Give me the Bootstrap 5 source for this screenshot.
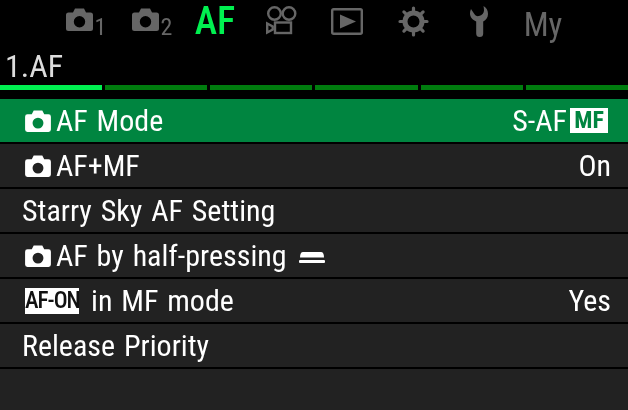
<!DOCTYPE html>
<html lang="en">
<head>
<meta charset="utf-8">
<title>AF Menu</title>
<link rel="stylesheet" href="https://cdn.jsdelivr.net/npm/bootstrap@5.3.0/dist/css/bootstrap.min.css">
<style>
html,body{height:100%;background:#000;overflow:hidden}
body{font-family:"Roboto Condensed",Roboto,sans-serif;font-stretch:75%;color:#fff}
.shell{width:628px;height:410px;filter:blur(.35px)}
.tabbar{height:42px;padding-left:50px}
.tabcell{width:66px;height:42px;color:#666;font-size:30px;line-height:1}
.tabcell svg{display:block;fill:currentColor}
.tabcamcell{padding-left:6px}
.tabcam{margin-bottom:4px}
.tabmovie{margin-bottom:2px}
.tabsub{font-size:24px;margin-left:2px;align-self:flex-end;margin-bottom:3px;line-height:1}
.tabactive{color:#00f050;font-weight:500;font-size:38px;padding-bottom:1px}
.tabmy{font-size:33px;padding:7px 4px 0 0}
.sectitle{height:43px;padding:8px 0 0 5px;font-size:32px;line-height:32px;color:#ddd}
.segrow{display:grid;grid-template-columns:repeat(6,1fr);gap:3px;height:5px;margin-bottom:9px}
.segpart{background:#007c0e}
.segon{background:#00f050}
.menulist{height:311px;background:#222}
.menurow{height:45px;padding:0 17px 0 22px;border-bottom:2px solid #000;font-size:30px;line-height:1;word-spacing:2px;background:#222;color:#fff}
.menurow svg{display:block;fill:currentColor;flex:none}
.rowsel{background:#008540}
.camgap{margin:0 5px 0 3px}
.tagmf{background:#fff;color:#008540;font-weight:700;font-size:24px;width:38px;height:25px;line-height:25px;text-align:center;margin:0 3px 0 3px;word-spacing:0}
.tagon{background:#fff;color:#111;font-weight:500;font-size:23px;width:54px;height:26px;line-height:26px;text-align:center;margin:0 12px 0 3px;letter-spacing:-1px;white-space:nowrap}
.halfmark{margin-left:12px;margin-top:3px}
</style>
</head>
<body>
<svg width="0" height="0" class="d-block position-absolute"><defs><path id="camshape" fill-rule="evenodd" d="M2.500 4.500H7L9 .5h9L20 4.500h4.500A2.500 2.500 0 0 1 27 7v13.500a2.500 2.500 0 0 1-2.500 2.500h-22A2.500 2.500 0 0 1 0 20.500V7A2.500 2.500 0 0 1 2.500 4.500ZM13.500 8a5.700 5.700 0 1 0 0 11.400 5.700 5.700 0 0 0 0-11.400Z"/></defs></svg>
<div class="shell d-flex flex-column">
  <div class="tabbar d-flex">
    <div class="tabcell tabcamcell d-flex justify-content-center align-items-center">
      <svg class="tabcam" width="27" height="23" viewBox="0 0 27 23"><use href="#camshape"/></svg>
      <span class="tabsub">1</span>
    </div>
    <div class="tabcell tabcamcell d-flex justify-content-center align-items-center">
      <svg class="tabcam" width="27" height="23" viewBox="0 0 27 23"><use href="#camshape"/></svg>
      <span class="tabsub">2</span>
    </div>
    <div class="tabcell tabactive d-flex justify-content-center align-items-center">AF</div>
    <div class="tabcell d-flex justify-content-center align-items-center">
      <svg class="tabmovie" width="31" height="29" viewBox="0 0 31 29"><g fill="none" stroke="currentColor" stroke-width="2.400"><circle cx="8.500" cy="7.500" r="6.300"/><circle cx="23" cy="7.500" r="6.300"/><rect x="9" y="16.500" width="16" height="10.500"/><path d="M1.200 17.500v9l5.500-3v-3Z"/></g></svg>
    </div>
    <div class="tabcell d-flex justify-content-center align-items-center">
      <svg width="32" height="27" viewBox="0 0 32 27"><rect x="1.200" y="1.200" width="29.600" height="24.600" rx="1.500" fill="none" stroke="currentColor" stroke-width="2.400"/><path d="M9 6.500 25 13.500 9 20.500Z"/></svg>
    </div>
    <div class="tabcell d-flex justify-content-center align-items-center">
      <svg width="31" height="31" viewBox="0 0 31 31"><g fill="none" stroke="currentColor"><circle cx="15.500" cy="15.500" r="8.500" stroke-width="5"/><g stroke-width="3.200" stroke-linecap="round"><path d="M15.500 2v4M15.500 25v4M2 15.500h4M25 15.500h4M5.900 5.900l3 3M22.100 22.100l3 3M5.900 25.100l3-3M22.100 8.900l3-3"/></g></g></svg>
    </div>
    <div class="tabcell d-flex justify-content-center align-items-center">
      <svg width="18" height="31" viewBox="0 0 18 31"><path d="M13.500 0C16.500 1.500 18 4.500 18 8c0 3.500-2 6-4.800 7.500v12a3.500 3.500 0 0 1-7 0v-12C2.500 14 0 11 0 7.500 0 6 .3 4.500 1 3l3 4.500C5 9.500 7 10.500 9 10c3-.5 5-3 5-5.500 0-1.500-.2-3-.5-4.500Z"/></svg>
    </div>
    <div class="tabcell tabmy d-flex justify-content-center align-items-center">My</div>
  </div>
  <div class="sectitle">1.AF</div>
  <div class="segrow">
    <div class="segpart segon"></div><div class="segpart"></div><div class="segpart"></div><div class="segpart"></div><div class="segpart"></div><div class="segpart"></div>
  </div>
  <div class="menulist">
    <div class="menurow rowsel d-flex align-items-center justify-content-between">
      <div class="d-flex align-items-center"><svg class="camgap" width="26" height="22" viewBox="0 0 27 23"><use href="#camshape"/></svg><span>AF Mode</span></div>
      <div class="d-flex align-items-center"><span>S-AF</span><span class="tagmf">MF</span></div>
    </div>
    <div class="menurow d-flex align-items-center justify-content-between">
      <div class="d-flex align-items-center"><svg class="camgap" width="26" height="22" viewBox="0 0 27 23"><use href="#camshape"/></svg><span>AF+MF</span></div>
      <span>On</span>
    </div>
    <div class="menurow d-flex align-items-center justify-content-between"><span>Starry Sky AF Setting</span></div>
    <div class="menurow d-flex align-items-center justify-content-between">
      <div class="d-flex align-items-center"><svg class="camgap" width="26" height="22" viewBox="0 0 27 23"><use href="#camshape"/></svg><span>AF by half-pressing</span><svg class="halfmark" width="26" height="11" viewBox="0 0 26 11"><path d="M4 0h18c2 0 3 2 3 5.500H1C1 2 2 0 4 0Z"/><rect x="0" y="8" width="26" height="3" rx="1"/></svg></div>
    </div>
    <div class="menurow d-flex align-items-center justify-content-between">
      <div class="d-flex align-items-center"><span class="tagon">AF-ON</span><span>in MF mode</span></div>
      <span>Yes</span>
    </div>
    <div class="menurow d-flex align-items-center justify-content-between"><span>Release Priority</span></div>
  </div>
</div>
<script src="https://cdn.jsdelivr.net/npm/bootstrap@5.3.0/dist/js/bootstrap.bundle.min.js"></script>
</body>
</html>
